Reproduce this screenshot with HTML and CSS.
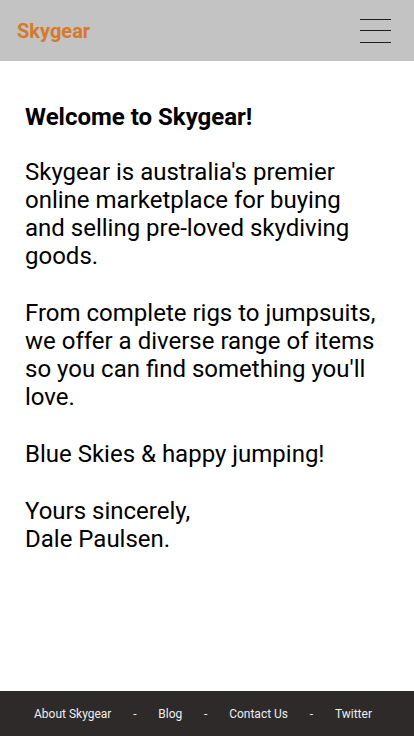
FILE: index.html
```html
<!DOCTYPE html>
<html>
<head>
<meta charset="utf-8">
<link rel="stylesheet" href="styles.css">
</head>
<body>
<div class="page">
  <header class="topbar">
    <div class="logo">Skygear</div>
    <div class="burger"><span></span><span></span><span></span></div>
  </header>
  <main class="content">
    <h1 class="title">Welcome to Skygear!</h1>
    <p>Skygear is australia's premier online marketplace for buying and selling pre-loved skydiving goods.</p>
    <p>From complete rigs to jumpsuits, we offer a diverse range of items so you can find something you'll love.</p>
    <p>Blue Skies &amp; happy jumping!</p>
    <p>Yours sincerely,<br>Dale Paulsen.</p>
  </main>
  <footer class="footer">
    <span>About Skygear</span><span class="sep">-</span><span>Blog</span><span class="sep">-</span><span>Contact Us</span><span class="sep">-</span><span>Twitter</span>
  </footer>
</div>
</body>
</html>
```
FILE: styles.css
```css
* { box-sizing: border-box; }
html, body { margin: 0; padding: 0; }
body { font-family: Roboto, "Liberation Sans", sans-serif; background: #fff; color: #000; }
.page { min-height: 736px; display: flex; flex-direction: column; }
.topbar {
  height: 61px; background: #c3c3c3;
  display: flex; align-items: center; justify-content: space-between;
  padding: 0 23px 0 17px;
}
.logo { color: #d7792a; font-weight: 700; font-size: 20px; }
.burger { width: 31px; height: 24px; display: flex; flex-direction: column; justify-content: space-between; }
.burger span { display: block; height: 1px; background: #1e1e1e; }
.content { flex: 1; padding: 0 35px 0 25px; font-size: 24px; line-height: 28px; }
.title { font-size: 24px; font-weight: 700; line-height: 28px; margin: 42px 0 27px; }
.content p { margin: 0 0 29px; }
.footer {
  height: 45px; background: #2d2a29; color: #eee;
  display: flex; align-items: center; justify-content: space-between;
  padding: 0 42px 0 34px;
  font-size: 12px;
}
```
